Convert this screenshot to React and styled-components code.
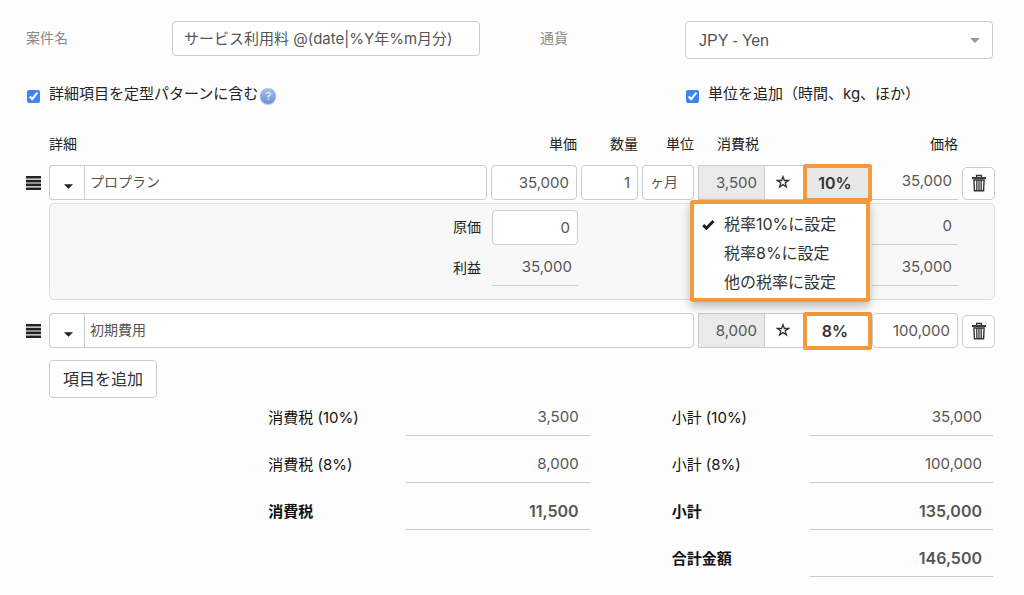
import { useState } from "react";
import styled, { createGlobalStyle } from "styled-components";

const GlobalStyle = createGlobalStyle`
    * {
        box-sizing: border-box;
    }
    body {
        margin: 0;
        background: #fdfdfd;
        color: #222;
    }
    body, input, button, select {
        font-family: Inter, "Noto Sans CJK JP", sans-serif;
        font-size: 15px;
        line-height: 20px;
    }
`
const Page = styled.main`
    padding: 21px 29px 16px 26px;
`
const FormGrid = styled.div`
    display: grid;
    grid-template-columns: 146px 1fr 60px 145px 1fr;
    margin-right: 2px;
`
const FormLabel = styled.label`
    grid-column: ${props => props.$column};
    color: #888;
    font-size: 14px;
    padding-top: 7px;
`
const TextInput = styled.input`
    width: 100%;
    min-width: 0;
    height: 35px;
    padding: 0 ${props => props.$pad || 7}px;
    border: 1px solid #ccc;
    border-radius: 4px;
    background: #fff;
    color: #555;
    text-align: ${props => props.$align || "left"};
`
const SubjectInput = styled(TextInput)`
    padding-bottom: 2px;
`
const SelectBox = styled.div`
    position: relative;
    svg {
        position: absolute;
        right: 13px;
        top: 17px;
        pointer-events: none;
    }
`
const Select = styled.select`
    appearance: none;
    width: 100%;
    height: 38px;
    padding: 2px 13px 0;
    border: 1px solid #ccc;
    border-radius: 4px;
    background: #fff;
    color: #555;
    font-family: "Liberation Sans", sans-serif;
    font-size: 16px;
`
const CheckField = styled.div`
    grid-column: ${props => props.$column};
    display: flex;
    align-items: center;
    margin-top: 25px;
    input {
        width: 13px;
        height: 13px;
        margin: 4px 9px 0 1px;
        accent-color: #3f83f5;
    }
`
const HelpButton = styled.button`
    width: 16px;
    height: 16px;
    margin: 4px 0 0 2px;
    padding: 0;
    border: none;
    border-radius: 50%;
    background: linear-gradient(#a9c3ee, #668fdc);
    box-shadow: 0 1px 1px #bbb;
    color: #fff;
    font-size: 11px;
    line-height: 16px;
`
const Items = styled.table`
    display: block;
    margin-top: 30px;
    thead, tbody {
        display: block;
    }
`
const ItemRow = styled.tr`
    display: grid;
    grid-template-columns: 19px 1fr 86px 57px 52px 170px 86px 33px;
    column-gap: 4px;
    align-items: center;
    margin-top: ${props => props.$top || 0}px;
`
const HeadCell = styled.th`
    grid-column: ${props => props.$column};
    padding: 0 0 0 ${props => props.$indent || 0}px;
    font-size: 14px;
    font-weight: 400;
    text-align: ${props => props.$align || "right"};
`
const Cell = styled.td`
    display: flex;
    min-width: 0;
    padding: 0;
    grid-column: span ${props => props.$span || 1};
`
const HandleButton = styled.button`
    display: flex;
    padding: 0;
    border: none;
    background: none;
    color: #222;
`
const CaretButton = styled.button`
    flex: none;
    width: 35px;
    height: 35px;
    padding: 3px 0 0 2px;
    border: 1px solid #ccc;
    border-right: none;
    border-radius: 4px 0 0 4px;
    background: #fff;
    color: #222;
`
const NameInput = styled(TextInput)`
    flex: 1;
    padding: 0 5px 3px;
    border-radius: 0 4px 4px 0;
    font-size: 14px;
`
const UnitInput = styled(TextInput)`
    padding-bottom: 3px;
    font-size: 14px;
`
const TaxGroup = styled.div`
    position: relative;
    display: flex;
    align-items: center;
    flex: 1;
    margin-right: -4px;
`
const TaxInput = styled(TextInput)`
    flex: 1;
    border-radius: 0;
    background: #eaeaea;
`
const StarButton = styled.button`
    width: 38px;
    height: 35px;
    padding: 0 3px 0 0;
    border: 1px solid #ccc;
    border-width: 1px 0;
    background: #fff;
    color: #333;
    svg {
        display: block;
        margin: 0 auto 2px;
    }
`
const RateButton = styled.button`
    width: 69px;
    height: 38px;
    margin: -2px 0;
    padding: 0 5px 0 0;
    border: 4px solid #f5993d;
    border-radius: 2px;
    background: ${props => props.$open ? "#e8e8e8" : "#fff"};
    color: #333;
    font-size: 16px;
    font-weight: 600;
`
const RateMenu = styled.div`
    position: absolute;
    z-index: 2;
    top: 35px;
    right: 2px;
    width: 180px;
    padding: 6px 0 1px;
    border: 4px solid #f5993d;
    border-radius: 3px;
    background: #fff;
    box-shadow: 0 5px 10px rgba(0,0,0,.25);
`
const RateOption = styled.button`
    display: flex;
    align-items: center;
    width: 100%;
    padding: 4px 0 5px 8px;
    border: none;
    background: none;
    color: #333;
    font-size: 16px;
    white-space: nowrap;
`
const CheckSlot = styled.span`
    display: flex;
    width: 22px;
`
const Amount = styled.output`
    display: block;
    width: 100%;
    height: 35px;
    padding: 6px ${props => props.$pad || 6}px 0 0;
    border-bottom: 1px solid #ccc;
    color: #555;
    font-size: ${props => props.$bold ? 16 : 15}px;
    font-weight: ${props => props.$bold ? 600 : 400};
    text-align: right;
`
const TrashButton = styled.button`
    display: flex;
    align-items: center;
    justify-content: center;
    width: 33px;
    height: 33px;
    margin-top: 1px;
    padding: 0;
    border: 1px solid #ccc;
    border-radius: 5px;
    background: #fff;
    color: #333;
`
const DetailPanel = styled.td`
    grid-column: 2 / -1;
    padding: 6px 36px 13px 0;
    border: 1px solid #ddd;
    border-radius: 5px;
    background: #f8f8f8;
`
const DetailLine = styled.div`
    display: grid;
    grid-template-columns: 1fr 86px 294px 86px;
    & + & {
        margin-top: 6px;
    }
    & > :last-child {
        grid-column: 4;
    }
`
const DetailLabel = styled.label`
    padding: 7px 11px 0 0;
    font-size: 14px;
    text-align: right;
`
const AddButton = styled.button`
    margin: 12px 0 0 23px;
    padding: 8px 13px;
    border: 1px solid #ccc;
    border-radius: 4px;
    background: #fff;
    color: #333;
    font-size: 16px;
`
const Totals = styled.section`
    display: grid;
    grid-template-columns: 1fr 1fr;
    column-gap: 82px;
    align-items: start;
    margin: 3px 2px 0 25%;
`
const TotalRow = styled.div`
    display: grid;
    grid-template-columns: 138px 1fr;
    margin-bottom: 12px;
`
const TotalLabel = styled.label`
    padding-top: 7px;
    color: #111;
    font-weight: ${props => props.$bold ? 700 : 400};
`

const Caret = ({ color, size = 10 }) => (
    <svg width={size} height="5" viewBox="0 0 10 5"><path d="M0 0h10L5 5z" fill={color} /></svg>
)

const StarIcon = () => (
    <svg width="14" height="14" viewBox="0 0 14 14" fill="none" stroke="currentColor" strokeWidth="1.3">
        <path d="M7 1.6l1.4 3.9h4.1L9.2 8l1.2 4L7 9.6 3.6 12l1.2-4L1.5 5.5h4.1z" />
    </svg>
)

const TrashIcon = () => (
    <svg width="16" height="18" viewBox="0 0 16 18" fill="none" stroke="currentColor">
        <path d="M5.5 3V1.5h5V3" strokeWidth="1.3" />
        <path d="M1 4h14" strokeWidth="1.9" />
        <path d="M2.9 6l.5 10.8h9.2L13.1 6z" strokeWidth="1.4" />
        <path d="M5.8 6v10.5M8 6v10.5M10.2 6v10.5" strokeWidth="1.3" />
    </svg>
)

const HandleIcon = () => (
    <svg width="15" height="14" viewBox="0 0 15 14" fill="currentColor">
        <path d="M0 0h15v2.6H0zM0 3.8h15v2.6H0zM0 7.6h15v2.6H0zM0 11.4h15V14H0z" />
    </svg>
)

const TickIcon = () => (
    <svg width="13" height="11" viewBox="0 0 13 11"><path d="M1.2 6.2l3.2 3L11.5 2" fill="none" stroke="#222" strokeWidth="3" /></svg>
)

const rateOptions = ["税率10%に設定", "税率8%に設定", "他の税率に設定"]

const taxTotals = [
    { label: "消費税 (10%)", value: "3,500" },
    { label: "消費税 (8%)", value: "8,000" },
    { label: "消費税", value: "11,500", bold: true },
]

const priceTotals = [
    { label: "小計 (10%)", value: "35,000" },
    { label: "小計 (8%)", value: "100,000" },
    { label: "小計", value: "135,000", bold: true },
    { label: "合計金額", value: "146,500", bold: true },
]

function TaxCell({ tax, rate, defaultOpen }) {
    const [open, setOpen] = useState(defaultOpen)
    const [selected, setSelected] = useState(0)

    return (
        <Cell>
            <TaxGroup>
                <TaxInput aria-label="消費税" $align="right" defaultValue={tax} readOnly />
                <StarButton type="button" aria-label="固定"><StarIcon /></StarButton>
                <RateButton type="button" aria-haspopup="menu" aria-expanded={open} $open={open} onClick={() => setOpen(!open)}>{rate}</RateButton>
                {open && (
                    <RateMenu role="menu">
                        {rateOptions.map((option, i) => (
                            <RateOption type="button" role="menuitemradio" aria-checked={i === selected} key={option} onClick={() => setSelected(i)}>
                                <CheckSlot>{i === selected && <TickIcon />}</CheckSlot>
                                {option}
                            </RateOption>
                        ))}
                    </RateMenu>
                )}
            </TaxGroup>
        </Cell>
    )
}

function NameCell({ name, span }) {
    return (
        <>
            <Cell><HandleButton type="button" aria-label="並べ替え"><HandleIcon /></HandleButton></Cell>
            <Cell $span={span} colSpan={span}>
                <CaretButton type="button" aria-label="項目を選択"><Caret color="#222" size={9} /></CaretButton>
                <NameInput aria-label="詳細" defaultValue={name} />
            </Cell>
        </>
    )
}

function TrashCell() {
    return <Cell><TrashButton type="button" aria-label="削除"><TrashIcon /></TrashButton></Cell>
}

function TotalList({ id, rows }) {
    return (
        <div>
            {rows.map((row, i) => (
                <TotalRow key={row.label}>
                    <TotalLabel htmlFor={id + i} $bold={row.bold}>{row.label}</TotalLabel>
                    <Amount id={id + i} $pad={11} $bold={row.bold}>{row.value}</Amount>
                </TotalRow>
            ))}
        </div>
    )
}

function App() {
    return (
        <Page>
            <GlobalStyle />
            <FormGrid>
                <FormLabel htmlFor="subject" $column="1">案件名</FormLabel>
                <SubjectInput id="subject" $pad={11} defaultValue="サービス利用料 @(date|%Y年%m月分)" />
                <FormLabel htmlFor="currency" $column="4">通貨</FormLabel>
                <SelectBox>
                    <Select id="currency" defaultValue="JPY">
                        <option value="JPY">JPY - Yen</option>
                    </Select>
                    <Caret color="#999" />
                </SelectBox>
                <CheckField $column="1 / 4">
                    <input type="checkbox" id="pattern" defaultChecked />
                    <label htmlFor="pattern">詳細項目を定型パターンに含む</label>
                    <HelpButton type="button">?</HelpButton>
                </CheckField>
                <CheckField $column="5">
                    <input type="checkbox" id="units" defaultChecked />
                    <label htmlFor="units">単位を追加（時間、kg、ほか）</label>
                </CheckField>
            </FormGrid>
            <Items>
                <thead>
                    <ItemRow>
                        <HeadCell $column="2" $align="left">詳細</HeadCell>
                        <HeadCell $column="3">単価</HeadCell>
                        <HeadCell $column="4">数量</HeadCell>
                        <HeadCell $column="5">単位</HeadCell>
                        <HeadCell $column="6" $align="left" $indent={19}>消費税</HeadCell>
                        <HeadCell $column="7">価格</HeadCell>
                    </ItemRow>
                </thead>
                <tbody>
                    <ItemRow $top={11}>
                        <NameCell name="プロプラン" />
                        <Cell><TextInput aria-label="単価" $align="right" defaultValue="35,000" /></Cell>
                        <Cell><TextInput aria-label="数量" $align="right" defaultValue="1" /></Cell>
                        <Cell><UnitInput aria-label="単位" defaultValue="ヶ月" /></Cell>
                        <TaxCell tax="3,500" rate="10%" defaultOpen />
                        <Cell><Amount>35,000</Amount></Cell>
                        <TrashCell />
                    </ItemRow>
                    <ItemRow $top={3}>
                        <DetailPanel colSpan={7}>
                            <DetailLine>
                                <DetailLabel htmlFor="cost">原価</DetailLabel>
                                <TextInput id="cost" $align="right" defaultValue="0" />
                                <Amount>0</Amount>
                            </DetailLine>
                            <DetailLine>
                                <DetailLabel htmlFor="profit">利益</DetailLabel>
                                <Amount id="profit">35,000</Amount>
                                <Amount>35,000</Amount>
                            </DetailLine>
                        </DetailPanel>
                    </ItemRow>
                    <ItemRow $top={13}>
                        <NameCell name="初期費用" span={4} />
                        <TaxCell tax="8,000" rate="8%" defaultOpen={false} />
                        <Cell><TextInput aria-label="価格" $align="right" defaultValue="100,000" /></Cell>
                        <TrashCell />
                    </ItemRow>
                </tbody>
            </Items>
            <AddButton type="button">項目を追加</AddButton>
            <Totals>
                <TotalList id="tax" rows={taxTotals} />
                <TotalList id="price" rows={priceTotals} />
            </Totals>
        </Page>
    )
}

export default App;
